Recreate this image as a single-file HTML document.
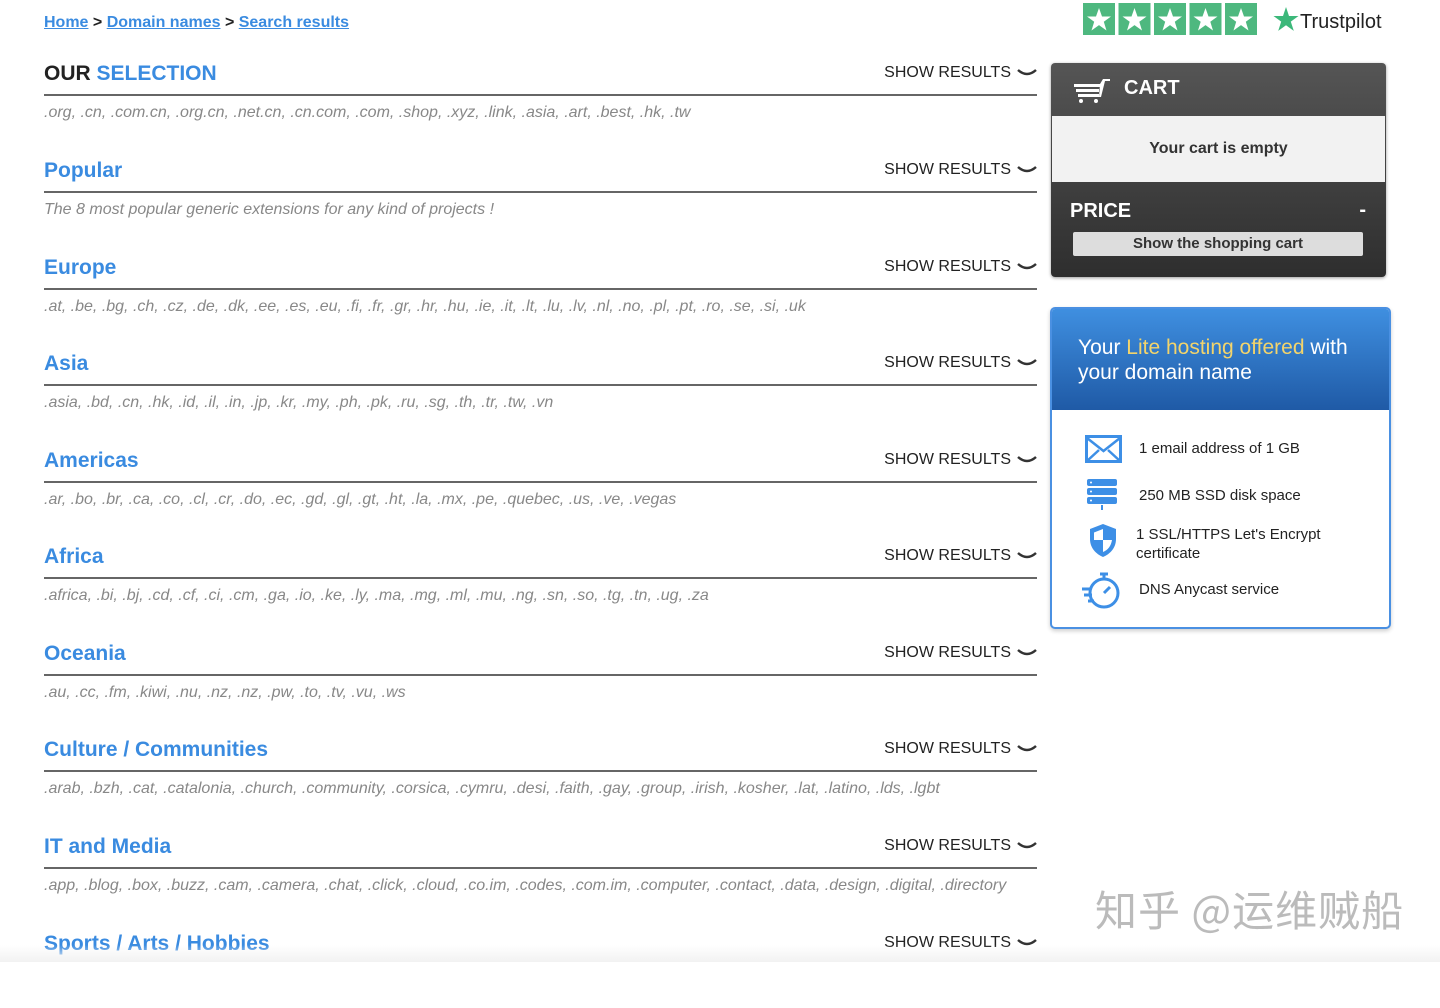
<!DOCTYPE html>
<html><head><meta charset="utf-8"><style>
body{margin:0;width:1440px;height:962px;overflow:hidden;background:#fff;font-family:"Liberation Sans",Arial,sans-serif;position:relative}
a{color:#3a8be0;text-decoration:underline;font-weight:bold}
.bc{position:absolute;left:44px;top:14px;font-size:16px;font-weight:bold;color:#222}
.sec{position:absolute;left:44px;width:993px;height:80px}
.t{position:absolute;left:0;top:4px;font-size:21px;font-weight:bold;color:#3a8be0}
.sr{position:absolute;right:0;top:6px;font-size:16px;color:#222}
.sr svg{vertical-align:middle;margin-left:6px}
.ln{position:absolute;left:0;right:0;top:36px;border-top:2px solid #666}
.d{position:absolute;left:0;top:46px;font-size:16px;font-style:italic;color:#888;white-space:nowrap}
.cart{position:absolute;left:1051px;top:63px;width:335px;height:214px;border-radius:4px;background:linear-gradient(#555,#2e2e2e);box-shadow:0 1px 3px rgba(0,0,0,.4)}
.feat{position:absolute;left:1050px;top:307px;width:337px;height:318px;border:2px solid #4a90e2;border-radius:5px;background:#fff;box-shadow:0 2px 4px rgba(0,0,0,.2);overflow:hidden}
.fi{position:absolute;font-size:15px;color:#222}
</style></head><body>
<div class="bc"><a href="#">Home</a> &gt; <a href="#">Domain names</a> &gt; <a href="#">Search results</a></div>

<div style="position:absolute;left:1083px;top:3px;display:flex;gap:3px">
<svg width="174" height="32"><g fill="#4eb87f"><rect x="0" width="32" height="32"/><rect x="35.5" width="32" height="32"/><rect x="71" width="32" height="32"/><rect x="106.5" width="32" height="32"/><rect x="142" width="32" height="32"/></g><g fill="#fff"><path id="s" d="M16 5l3 8.5h9l-7.2 5.3 2.7 8.7-7.5-5.4-7.5 5.4 2.7-8.7L4 13.5h9z"/><use href="#s" x="35.5"/><use href="#s" x="71"/><use href="#s" x="106.5"/><use href="#s" x="142"/></g></svg>
</div>
<svg style="position:absolute;left:1273px;top:6px" width="26" height="26"><path d="M13 1l3 9h9.5l-7.7 5.6 3 9.3-7.8-5.7-7.8 5.7 3-9.3L0.5 10H10z" fill="#3cb87a"/></svg>
<div style="position:absolute;left:1300px;top:11px;font-size:20px;color:#222">Trustpilot</div>

<div class="sec" style="top:58px"><div class="t"><span style="color:#222">OUR</span> SELECTION</div><div class="sr">SHOW RESULTS<svg width="20" height="10"><path d="M1 2q9 8 18 0" stroke="#333" stroke-width="2.5" fill="none"/></svg></div><div class="ln"></div><div class="d">.org, .cn, .com.cn, .org.cn, .net.cn, .cn.com, .com, .shop, .xyz, .link, .asia, .art, .best, .hk, .tw</div></div>
<div class="sec" style="top:155px"><div class="t">Popular</div><div class="sr">SHOW RESULTS<svg width="20" height="10"><path d="M1 2q9 8 18 0" stroke="#333" stroke-width="2.5" fill="none"/></svg></div><div class="ln"></div><div class="d">The 8 most popular generic extensions for any kind of projects !</div></div>
<div class="sec" style="top:252px"><div class="t">Europe</div><div class="sr">SHOW RESULTS<svg width="20" height="10"><path d="M1 2q9 8 18 0" stroke="#333" stroke-width="2.5" fill="none"/></svg></div><div class="ln"></div><div class="d">.at, .be, .bg, .ch, .cz, .de, .dk, .ee, .es, .eu, .fi, .fr, .gr, .hr, .hu, .ie, .it, .lt, .lu, .lv, .nl, .no, .pl, .pt, .ro, .se, .si, .uk</div></div>
<div class="sec" style="top:348px"><div class="t">Asia</div><div class="sr">SHOW RESULTS<svg width="20" height="10"><path d="M1 2q9 8 18 0" stroke="#333" stroke-width="2.5" fill="none"/></svg></div><div class="ln"></div><div class="d">.asia, .bd, .cn, .hk, .id, .il, .in, .jp, .kr, .my, .ph, .pk, .ru, .sg, .th, .tr, .tw, .vn</div></div>
<div class="sec" style="top:445px"><div class="t">Americas</div><div class="sr">SHOW RESULTS<svg width="20" height="10"><path d="M1 2q9 8 18 0" stroke="#333" stroke-width="2.5" fill="none"/></svg></div><div class="ln"></div><div class="d">.ar, .bo, .br, .ca, .co, .cl, .cr, .do, .ec, .gd, .gl, .gt, .ht, .la, .mx, .pe, .quebec, .us, .ve, .vegas</div></div>
<div class="sec" style="top:541px"><div class="t">Africa</div><div class="sr">SHOW RESULTS<svg width="20" height="10"><path d="M1 2q9 8 18 0" stroke="#333" stroke-width="2.5" fill="none"/></svg></div><div class="ln"></div><div class="d">.africa, .bi, .bj, .cd, .cf, .ci, .cm, .ga, .io, .ke, .ly, .ma, .mg, .ml, .mu, .ng, .sn, .so, .tg, .tn, .ug, .za</div></div>
<div class="sec" style="top:638px"><div class="t">Oceania</div><div class="sr">SHOW RESULTS<svg width="20" height="10"><path d="M1 2q9 8 18 0" stroke="#333" stroke-width="2.5" fill="none"/></svg></div><div class="ln"></div><div class="d">.au, .cc, .fm, .kiwi, .nu, .nz, .nz, .pw, .to, .tv, .vu, .ws</div></div>
<div class="sec" style="top:734px"><div class="t">Culture / Communities</div><div class="sr">SHOW RESULTS<svg width="20" height="10"><path d="M1 2q9 8 18 0" stroke="#333" stroke-width="2.5" fill="none"/></svg></div><div class="ln"></div><div class="d">.arab, .bzh, .cat, .catalonia, .church, .community, .corsica, .cymru, .desi, .faith, .gay, .group, .irish, .kosher, .lat, .latino, .lds, .lgbt</div></div>
<div class="sec" style="top:831px"><div class="t">IT and Media</div><div class="sr">SHOW RESULTS<svg width="20" height="10"><path d="M1 2q9 8 18 0" stroke="#333" stroke-width="2.5" fill="none"/></svg></div><div class="ln"></div><div class="d">.app, .blog, .box, .buzz, .cam, .camera, .chat, .click, .cloud, .co.im, .codes, .com.im, .computer, .contact, .data, .design, .digital, .directory</div></div>
<div class="sec" style="top:928px"><div class="t">Sports / Arts / Hobbies</div><div class="sr">SHOW RESULTS<svg width="20" height="10"><path d="M1 2q9 8 18 0" stroke="#333" stroke-width="2.5" fill="none"/></svg></div></div>

<div class="cart">
<svg style="position:absolute;left:22px;top:15px" width="38" height="26"><g fill="#fff"><rect x="1" y="6" width="26" height="3"/><rect x="3" y="11" width="23" height="3"/><rect x="5" y="16" width="21" height="3"/><path d="M27 6l3-5h7v2h-5l-4 16h-2z"/><circle cx="8" cy="23" r="2"/><circle cx="23" cy="23" r="2"/></g></svg>
<div style="position:absolute;left:73px;top:14px;color:#fff;font-weight:bold;font-size:20px">CART</div>
<div style="position:absolute;left:1px;right:1px;top:53px;height:66px;background:#f2f2f2;text-align:center;line-height:66px;font-weight:bold;font-size:16px;color:#333">Your cart is empty</div>
<div style="position:absolute;left:19px;top:137px;color:#fff;font-weight:bold;font-size:20px">PRICE</div>
<div style="position:absolute;right:20px;top:136px;color:#fff;font-weight:bold;font-size:20px">-</div>
<div style="position:absolute;left:22px;top:169px;width:290px;height:24px;background:#ddd;border-radius:2px;text-align:center;font-weight:bold;font-size:15px;line-height:24px;color:#333">Show the shopping cart</div>
</div>

<div class="feat">
<div style="height:101px;background:linear-gradient(#3f8fe0,#1f5aa6);padding:26px 0 0 26px;box-sizing:border-box;color:#fff;font-size:21px;line-height:25px">Your <span style="color:#f3d46b">Lite hosting offered</span> with<br>your domain name</div>
<svg style="position:absolute;left:33px;top:126px" width="37" height="28"><rect x="1.5" y="1.5" width="34" height="25" fill="none" stroke="#3d8fe6" stroke-width="3"/><path d="M2 3l16.5 13L35 3M2 26l12-11M35 26L23 15" stroke="#3d8fe6" stroke-width="2.5" fill="none"/></svg>
<div class="fi" style="left:87px;top:131px">1 email address of 1 GB</div>
<svg style="position:absolute;left:35px;top:170px" width="32" height="32"><g fill="#3d8fe6"><rect x="0" y="0" width="30" height="7" rx="2"/><rect x="0" y="9" width="30" height="7" rx="2"/><rect x="0" y="18" width="30" height="7" rx="2"/><rect x="14" y="26" width="2" height="5"/></g><g fill="#fff"><circle cx="4" cy="3.5" r="1"/><circle cx="4" cy="12.5" r="1"/><circle cx="4" cy="21.5" r="1"/></g></svg>
<div class="fi" style="left:87px;top:178px">250 MB SSD disk space</div>
<svg style="position:absolute;left:36px;top:214px" width="30" height="36"><path d="M15 1L2 6v10c0 9 6 15 13 18 7-3 13-9 13-18V6z" fill="#3d8fe6"/><path d="M15 6v11H6v-1.5V9.5L15 6zM15 17h9c-1 6-4 10-9 12z" fill="#fff"/></svg>
<div class="fi" style="left:84px;top:216px;line-height:19px">1 SSL/HTTPS Let's Encrypt<br>certificate</div>
<svg style="position:absolute;left:28px;top:260px" width="44" height="42"><g stroke="#3d8fe6" stroke-width="3" fill="none"><circle cx="24" cy="24" r="14"/><path d="M20 5h8M24 5v5M24 24l6-6M2 20h8M4 26h8M8 32h6"/></g></svg>
<div class="fi" style="left:87px;top:272px">DNS Anycast service</div>
</div>

<div style="position:absolute;left:1095px;top:878px;font-family:'Noto Sans CJK SC',sans-serif;font-size:42px;color:#bbb;letter-spacing:1px">知乎 @运维贼船</div>
<div style="position:absolute;left:0;top:945px;width:1440px;height:17px;background:linear-gradient(rgba(245,245,245,0),#f2f2f2)"></div>
</body></html>
